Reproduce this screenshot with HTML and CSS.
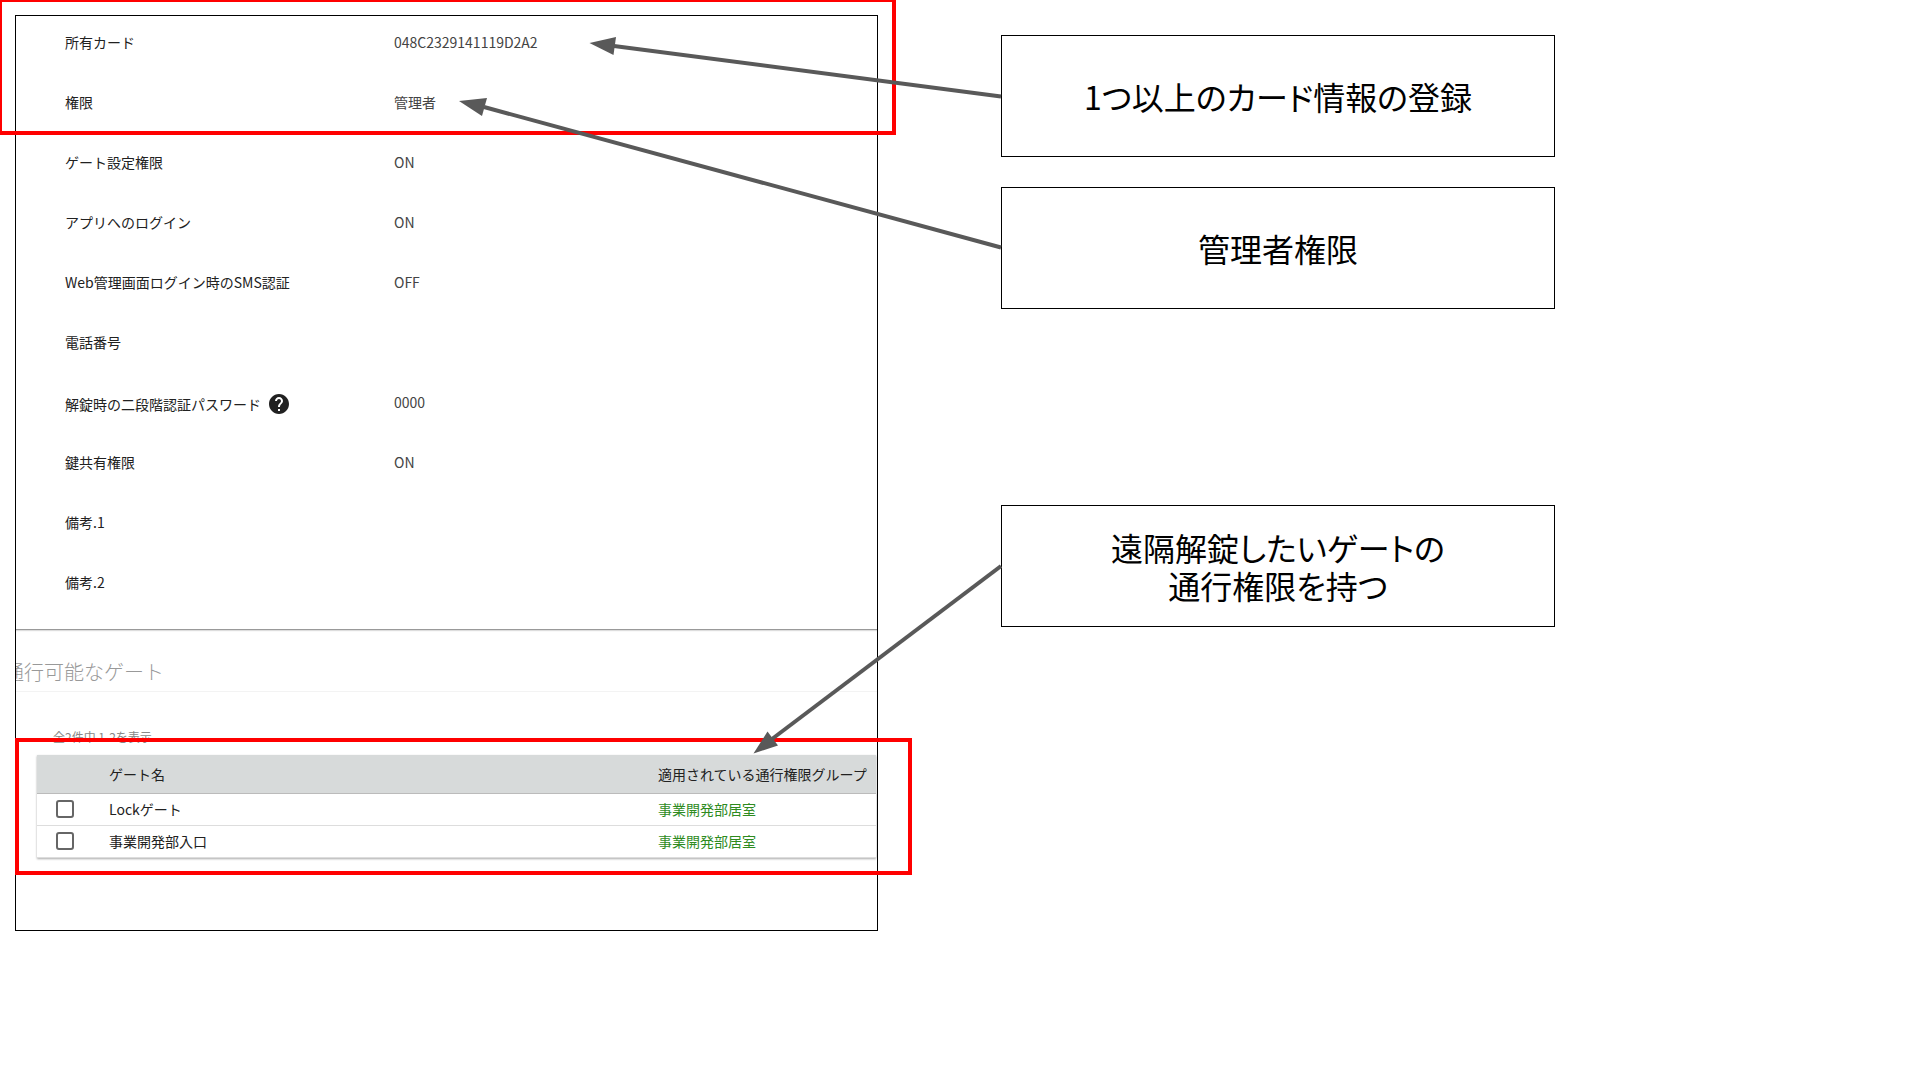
FILE: index.html
```html
<!DOCTYPE html>
<html lang="ja">

<head>
    <meta charset="UTF-8">
    <meta name="viewport" content="width=device-width, initial-scale=1.0">
    <title>遠隔解錠の権限設定</title>
    <link rel="stylesheet" href="styles.css">
</head>

<body>
    <main class="board">
        <div class="capture">
            <div class="panel">
                <dl class="details">
                    <div class="row"><dt>所有カード</dt><dd>048C2329141119D2A2</dd></div>
                    <div class="row"><dt>権限</dt><dd>管理者</dd></div>
                    <div class="row"><dt>ゲート設定権限</dt><dd>ON</dd></div>
                    <div class="row"><dt>アプリへのログイン</dt><dd>ON</dd></div>
                    <div class="row"><dt>Web管理画面ログイン時のSMS認証</dt><dd>OFF</dd></div>
                    <div class="row"><dt>電話番号</dt><dd></dd></div>
                    <div class="row">
                        <dt>解錠時の二段階認証パスワード
                            <button class="help" type="button" aria-label="ヘルプ">
                                <svg viewBox="0 0 24 24" width="24" height="24">
                                    <path fill="#212121" d="M12 2C6.48 2 2 6.48 2 12s4.48 10 10 10 10-4.48 10-10S17.52 2 12 2zm1 17h-2v-2h2v2zm2.07-7.75l-.9.92C13.45 12.9 13 13.5 13 15h-2v-.5c0-1.1.45-2.1 1.17-2.83l1.24-1.26c.37-.36.59-.86.59-1.41 0-1.1-.9-2-2-2s-2 .9-2 2H8c0-2.21 1.79-4 4-4s4 1.79 4 4c0 .88-.36 1.68-.93 2.25z"/>
                                </svg>
                            </button>
                        </dt>
                        <dd>0000</dd>
                    </div>
                    <div class="row"><dt>鍵共有権限</dt><dd>ON</dd></div>
                    <div class="row"><dt>備考.1</dt><dd></dd></div>
                    <div class="row"><dt>備考.2</dt><dd></dd></div>
                </dl>

                <section class="gates">
                    <h2>通行可能なゲート</h2>
                    <p class="count">全2件中 1-2を表示</p>
                    <table>
                        <thead>
                            <tr>
                                <th class="check"></th>
                                <th>ゲート名</th>
                                <th class="group">適用されている通行権限グループ</th>
                            </tr>
                        </thead>
                        <tbody>
                            <tr>
                                <td class="check"><input type="checkbox" id="gate-lock"></td>
                                <td><label for="gate-lock">Lockゲート</label></td>
                                <td class="group"><a href="#">事業開発部居室</a></td>
                            </tr>
                            <tr>
                                <td class="check"><input type="checkbox" id="gate-entrance"></td>
                                <td><label for="gate-entrance">事業開発部入口</label></td>
                                <td class="group"><a href="#">事業開発部居室</a></td>
                            </tr>
                        </tbody>
                    </table>
                </section>
            </div>
            <div class="highlight highlight-card"></div>
            <div class="highlight highlight-gates"></div>
        </div>

        <div class="notes">
            <p class="note">1つ以上のカード情報の登録</p>
            <p class="note">管理者権限</p>
            <p class="note note-gate">遠隔解錠したいゲートの<br>通行権限を持つ</p>
        </div>

        <!-- arrows from the notes to the panel -->
        <svg class="arrows" width="1002" height="800" viewBox="0 0 1002 800">
            <g stroke="#595959" stroke-width="4">
                <path d="M1001 96.5L614 46"/>
                <path d="M1001 247.5L484 107"/>
                <path d="M1001 566L772 739"/>
            </g>
            <g fill="#595959">
                <path d="M589.5 43L616 37L613.5 55z"/>
                <path d="M459 101L487 98L482 116z"/>
                <path d="M753.5 753.5L767.5 731.5L778 745.5z"/>
            </g>
        </svg>
    </main>
</body>

</html>
```
FILE: styles.css
```css
* {
    box-sizing: border-box;
}

body {
    margin: 0;
    background-color: #fff;
    color: #212121;
    font-family: "Noto Sans CJK JP", sans-serif;
    font-size: 14px;
    line-height: 20px;
}

p,
h2,
dl,
dd {
    margin: 0;
}

.board {
    position: relative;
    display: grid;
    grid-template-columns: 863fr 554fr;
    column-gap: 123px;
    align-items: start;
    padding: 15px 365px 15px 15px;
}

.capture {
    position: relative;
}

.panel {
    overflow: hidden;
    padding-bottom: 72px;
    border: 1px solid #000;
}

/* user details */
.details {
    display: grid;
    gap: 40px;
    padding: 16px 0 37px 49px;
    border-bottom: 1px solid #999;
    box-shadow: 0 1px 1px #ddd;
}

.row {
    display: grid;
    grid-template-columns: 329px 1fr;
    height: 20px;
}

.row dt {
    display: flex;
    align-items: center;
    gap: 6px;
}

.row dd {
    color: #444;
}

.help {
    display: flex;
    padding: 0;
    border: none;
    background: none;
    cursor: pointer;
}

/* gate list */
.gates h2 {
    margin-left: -12px;
    padding: 27px 0 4px;
    border-bottom: 1px solid #f3f3f3;
    color: #999;
    font-size: 20px;
    font-weight: 300;
    line-height: 30px;
}

.count {
    margin: 37px 0 10px 37px;
    color: #888;
    font-size: 12px;
    line-height: 16px;
}

table {
    width: calc(100% - 22px);
    margin-left: 21px;
    border-collapse: collapse;
    border-bottom: 1px solid #888;
    box-shadow: 0 1px 2px #aaa;
}

th,
td {
    height: 32px;
    padding: 0;
    border-bottom: 1px solid #ddd;
    text-align: left;
    font-weight: 400;
}

th {
    height: 38px;
    border-bottom-color: #bbb;
    background-color: #d7dada;
}

.check {
    width: 72px;
    padding-left: 19px;
}

.check input {
    display: block;
    appearance: none;
    width: 18px;
    height: 18px;
    margin: 0;
    border: 2px solid #666;
    border-radius: 3px;
    background-color: #fff;
}

.group {
    width: 218px;
}

.group a {
    color: #2e8b1e;
    text-decoration: none;
}

/* red frames over the panel */
.highlight {
    position: absolute;
    border: 4px solid #f00;
    pointer-events: none;
}

.highlight-card {
    top: -17px;
    right: -18px;
    left: -17px;
    height: 137px;
}

.highlight-gates {
    right: -34px;
    bottom: 56px;
    left: 0;
    height: 137px;
}

/* notes */
.notes {
    display: flex;
    flex-direction: column;
    gap: 30px;
    padding-top: 20px;
}

.note {
    display: flex;
    align-items: center;
    justify-content: center;
    min-height: 122px;
    border: 1px solid #000;
    color: #000;
    font-size: 32px;
    font-feature-settings: "palt";
    line-height: 38px;
    text-align: center;
}

.note-gate {
    margin-top: 166px;
}

.arrows {
    position: absolute;
    top: 0;
    left: 0;
    pointer-events: none;
}
```
